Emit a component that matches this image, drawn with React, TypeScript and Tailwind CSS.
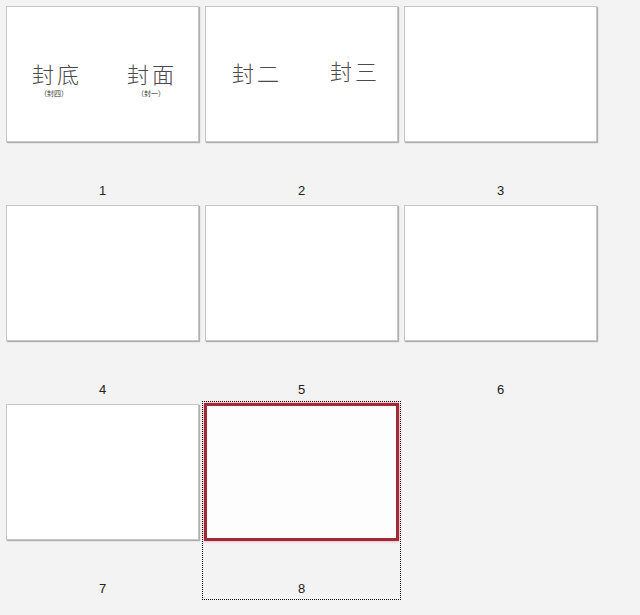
import type { ReactNode } from "react";

const cjk = "font-['Noto_Sans_CJK_SC','Noto_Sans',sans-serif]";

type SlideProps = {
  index: number;
  selected?: boolean;
  children?: ReactNode;
};

function Slide({ index, selected, children }: SlideProps) {
  return (
    <div
      className={
        "flex flex-col border p-[2px] " +
        (selected ? "border-dotted border-black" : "border-transparent")
      }
    >
      <div
        className={
          selected
            ? "relative -m-px h-[138px] w-[195px] border-[3px] border-[#9f2a37] bg-[#fdfdfd] shadow-[0_0_3px_rgba(220,70,90,0.55)]"
            : "relative h-[136px] w-[193px] border border-[#c6c6c6] bg-white shadow-[1px_1px_1px_rgba(0,0,0,0.28)]"
        }
      >
        {children}
      </div>
      <div className="mt-[41px] h-[16px] text-center font-['Liberation_Sans',sans-serif] text-[13px] leading-[16px] text-[#222]">
        {index}
      </div>
    </div>
  );
}

function Caption({ text, left, top }: { text: string; left: number; top: number }) {
  return (
    <span
      className={`${cjk} absolute text-[22px] font-light leading-none tracking-[3px] text-[#4a4a4a]`}
      style={{ left, top }}
    >
      {text}
    </span>
  );
}

function Note({ text, left, top }: { text: string; left: number; top: number }) {
  return (
    <span
      className={`${cjk} absolute text-[7px] leading-none text-[#333]`}
      style={{ left, top }}
    >
      {text}
    </span>
  );
}

export default function App() {
  return (
    <div className="h-[615px] w-[640px] overflow-hidden bg-[#f3f3f3] pl-[3px] pt-[3px]">
      <div className="grid w-[597px] grid-cols-3">
        <Slide index={1}>
          <Caption text="封底" left={25} top={55} />
          <Note text="（封四）" left={33} top={83} />
          <Caption text="封面" left={120} top={55} />
          <Note text="（封一）" left={130} top={83} />
        </Slide>
        <Slide index={2}>
          <Caption text="封二" left={26} top={54} />
          <Caption text="封三" left={124} top={52} />
        </Slide>
        <Slide index={3} />
        <Slide index={4} />
        <Slide index={5} />
        <Slide index={6} />
        <Slide index={7} />
        <Slide index={8} selected />
      </div>
    </div>
  );
}
